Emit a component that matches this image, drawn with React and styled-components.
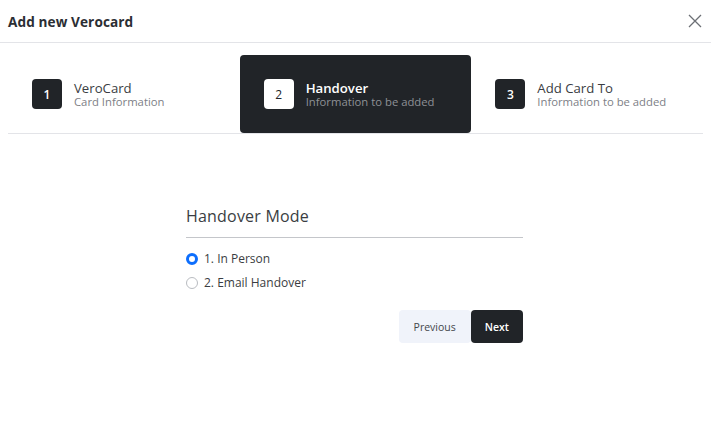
import React, { useState } from 'react';
import styled, { createGlobalStyle } from 'styled-components';

const GlobalStyle = createGlobalStyle`
  body {
    margin: 0;
    background: #fff;
    font-family: "Open Sans", "Liberation Sans", sans-serif;
    color: #212428;
  }
`;

const Modal = styled.div`
  width: 711px;
  height: 422px;
  background: #fff;
`;

const Header = styled.div`
  display: flex;
  align-items: center;
  justify-content: space-between;
  height: 43px;
  padding: 0 8px;
  border-bottom: 1px solid #e3e4e8;
  box-sizing: border-box;
`;

const Title = styled.h5`
  margin: 0;
  font-size: 13.6px;
  font-weight: 700;
  color: #2b2e33;
  letter-spacing: 0.1px;
`;

const CloseButton = styled.button`
  display: flex;
  align-items: center;
  justify-content: center;
  width: 16px;
  height: 16px;
  padding: 0;
  border: 0;
  background: none;
  color: #6c6f75;
  cursor: pointer;
`;

const Stepper = styled.div`
  display: grid;
  grid-template-columns: repeat(3, 1fr);
  margin: 12px 8px 0;
  border-bottom: 1px solid #e3e4e8;
`;

const Step = styled.div`
  display: flex;
  align-items: center;
  gap: 12px;
  height: 78px;
  padding-left: 24px;
  border-radius: 4px;
  background: ${p => (p.$active ? '#212428' : 'transparent')};
`;

const Badge = styled.div`
  flex: none;
  display: flex;
  align-items: center;
  justify-content: center;
  width: 30px;
  height: 30px;
  border-radius: 4px;
  font-size: 12px;
  font-weight: ${p => (p.$active ? 400 : 600)};
  background: ${p => (p.$active ? '#fff' : '#212428')};
  color: ${p => (p.$active ? '#212428' : '#fff')};
`;

const StepText = styled.div`
  display: flex;
  flex-direction: column;
  margin-top: 1px;
`;

const StepTitle = styled.span`
  font-size: 13.2px;
  line-height: 14px;
  font-weight: ${p => (p.$active ? 600 : 400)};
  color: ${p => (p.$active ? '#fff' : '#3a3d42')};
`;

const StepSub = styled.span`
  font-size: 11.3px;
  line-height: 13px;
  color: ${p => (p.$active ? '#8e9196' : '#7d8086')};
`;

const Body = styled.div`
  width: 337px;
  margin: 71px 0 0 186px;
`;

const SectionTitle = styled.div`
  font-size: 16px;
  color: #3a3d42;
  padding-bottom: 10px;
  border-bottom: 1px solid #c4c6ca;
  letter-spacing: 0.2px;
`;

const Options = styled.div`
  display: flex;
  flex-direction: column;
  gap: 7px;
  margin-top: 12px;
`;

const Option = styled.label`
  display: flex;
  align-items: center;
  gap: 6px;
  font-size: 12px;
  color: #3a3d42;
  cursor: pointer;
`;

const Radio = styled.span`
  flex: none;
  width: 12px;
  height: 12px;
  border-radius: 50%;
  box-sizing: border-box;
  border: ${p => (p.$checked ? '3.5px solid #0d6efd' : '1px solid #b9bcc1')};
  background: #fff;
`;

const Actions = styled.div`
  display: flex;
  justify-content: flex-end;
  margin-top: 19px;
`;

const Button = styled.button`
  height: 33px;
  padding: 0 ${p => (p.$primary ? '14px' : '15px')};
  border: 0;
  border-radius: 4px;
  font-family: inherit;
  font-size: 10.5px;
  font-weight: ${p => (p.$primary ? 600 : 400)};
  background: ${p => (p.$primary ? '#212428' : '#f0f3fa')};
  color: ${p => (p.$primary ? '#fff' : '#43464b')};
  cursor: pointer;
`;

const steps = [
  { n: 1, title: 'VeroCard', sub: 'Card Information' },
  { n: 2, title: 'Handover', sub: 'Information to be added' },
  { n: 3, title: 'Add Card To', sub: 'Information to be added' }
];

const modes = ['1. In Person', '2. Email Handover'];

export default function App() {
  const [mode, setMode] = useState(0);
  const current = 2;

  return (
    <Modal>
      <GlobalStyle />
      <Header>
        <Title>Add new Verocard</Title>
        <CloseButton aria-label="Close">
          <svg width="14" height="14" viewBox="0 0 14 14">
            <path d="M1 1L13 13M13 1L1 13" stroke="currentColor" strokeWidth="1.3" />
          </svg>
        </CloseButton>
      </Header>

      <Stepper>
        {steps.map(s => (
          <Step key={s.n} $active={s.n === current}>
            <Badge $active={s.n === current}>{s.n}</Badge>
            <StepText>
              <StepTitle $active={s.n === current}>{s.title}</StepTitle>
              <StepSub $active={s.n === current}>{s.sub}</StepSub>
            </StepText>
          </Step>
        ))}
      </Stepper>

      <Body>
        <SectionTitle>Handover Mode</SectionTitle>
        <Options>
          {modes.map((m, i) => (
            <Option key={m} onClick={() => setMode(i)}>
              <Radio $checked={mode === i} />
              {m}
            </Option>
          ))}
        </Options>
        <Actions>
          <Button>Previous</Button>
          <Button $primary>Next</Button>
        </Actions>
      </Body>
    </Modal>
  );
}
